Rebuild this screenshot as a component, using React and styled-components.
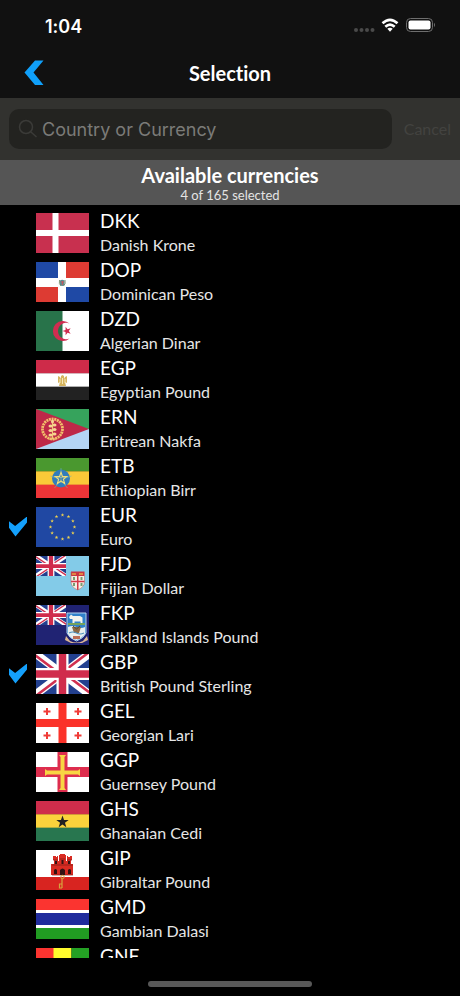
import React, { useState } from "react";
import styled, { createGlobalStyle } from "styled-components";

const starPoints = (cx, cy, r, turn = 0) =>
  Array.from({ length: 10 }, (_, i) => {
    const radius = i % 2 ? r * 0.4 : r;
    const angle = ((i * 36 - 90 + turn) * Math.PI) / 180;
    return `${(cx + radius * Math.cos(angle)).toFixed(2)},${(cy + radius * Math.sin(angle)).toFixed(2)}`;
  }).join(" ");

const Star = ({ x, y, r, fill, turn }) => (
  <polygon points={starPoints(x, y, r, turn)} fill={fill} />
);

const Bands = ({ colors }) =>
  colors.map((color, i) => (
    <rect
      key={color + i}
      y={(i * 40) / colors.length}
      width="53"
      height={40 / colors.length + 0.3}
      fill={color}
    />
  ));

const UnionJack = () => (
  <>
    <rect width="53" height="40" fill="#23408f" />
    <path d="M0 0L53 40M53 0L0 40" stroke="#fff" strokeWidth="8" />
    <path
      d="M-1 1L25.500 21M54 39L27.500 19M52 -1L25.500 19M1 41L27.500 21"
      stroke="#d03050"
      strokeWidth="2.600"
    />
    <path d="M26.500 0V40M0 20H53" stroke="#fff" strokeWidth="12" />
    <path d="M26.500 0V40M0 20H53" stroke="#d02c4c" strokeWidth="7.500" />
  </>
);

const Canton = () => (
  <svg width="30" height="20" viewBox="0 0 53 40" preserveAspectRatio="none">
    <UnionJack />
  </svg>
);

const flags = {
  DJF: <Bands colors={["#6ab2e7", "#12ad2b"]} />,
  DKK: (
    <>
      <rect width="53" height="40" fill="#c8304f" />
      <path d="M19.500 0V40M0 20H53" stroke="#fff" strokeWidth="6" />
    </>
  ),
  DOP: (
    <>
      <rect width="53" height="40" fill="#fff" />
      <path d="M0 0H22V16H0zM30 25H53V40H30z" fill="#1f49a5" />
      <path d="M30 0H53V16H30zM0 25H22V40H0z" fill="#dd3b33" />
      <path d="M24 18.500Q26 17 28.500 18.500V23Q26 25 24 23z" fill="#5d8a91" />
      <path d="M25 20H28M26.400 19V23" stroke="#c9595d" />
      <path d="M23.500 18Q22.500 22 25 24M29 18Q30 22 27.500 24" fill="none" stroke="#62805b" strokeWidth="0.800" />
    </>
  ),
  DZD: (
    <>
      <rect width="53" height="40" fill="#fff" />
      <rect width="26.500" height="40" fill="#28734a" />
      <path
        d="M33.500 12.500A10 10 0 1 0 33.500 27.500A8.200 8.200 0 1 1 33.500 12.500z"
        fill="#d02d50"
      />
      <Star x={31} y={20} r={4.500} turn={-18} fill="#d02d50" />
    </>
  ),
  EGP: (
    <>
      <Bands colors={["#ce2b49", "#ffffff", "#222222"]} />
      <path
        d="M22 16L24 17L25 19V16L26.500 15L28 16V19L29 17L31 16V23L29 22L30 26H23L24 22L22 23z"
        fill="#d5b45e"
      />
      <path d="M24 19V23M29 19V23M26.500 18V24" stroke="#f4e7b8" />
    </>
  ),
  ERN: (
    <>
      <rect width="53" height="20" fill="#36a35c" />
      <rect y="20" width="53" height="20" fill="#b4d5f5" />
      <path d="M0 0L53 20L0 40z" fill="#be2848" />
      <circle cx="16.500" cy="20" r="10" fill="none" stroke="#f2bf6b" strokeWidth="2.800" strokeDasharray="2 0.700" />
      <path d="M16.500 12V30M13 30H20" stroke="#f2c878" strokeWidth="1.200" />
      <g fill="#f6d491">
        <ellipse cx="16.500" cy="12.500" rx="1.500" ry="2" />
        <ellipse cx="14.500" cy="17" rx="2" ry="1.500" />
        <ellipse cx="18.500" cy="16" rx="2" ry="1.500" />
        <ellipse cx="14.500" cy="21.500" rx="2" ry="1.500" />
        <ellipse cx="18.500" cy="20.500" rx="2" ry="1.500" />
        <ellipse cx="14.500" cy="26" rx="2" ry="1.500" />
        <ellipse cx="18.500" cy="25" rx="2" ry="1.500" />
      </g>
    </>
  ),
  ETB: (
    <>
      <Bands colors={["#4a982f", "#fac938", "#ed3437"]} />
      <circle cx="25" cy="20.500" r="9" fill="#327cbb" />
      <path
        d="M25 14V9M31 18.500L35.500 17M28.500 25.500L31.500 29M21.500 25.500L18.500 29M19 18.500L14.500 17"
        transform="translate(0 1)"
        stroke="#6eb0b7"
        strokeWidth="0.600"
      />
      <polygon
        points={starPoints(25, 20.500, 6.200)}
        fill="#327cbb"
        stroke="#f2df78"
        strokeWidth="1.100"
      />
      <path d="M25 16V25M20.500 19.500H29.500" stroke="#ddd686" strokeWidth="0.500" />
    </>
  ),
  EUR: (
    <>
      <rect width="53" height="40" fill="#2048a3" />
      {Array.from({ length: 12 }, (_, i) => (
        <Star
          key={i}
          x={26.500 + 12 * Math.sin((i * Math.PI) / 6)}
          y={20 - 12 * Math.cos((i * Math.PI) / 6)}
          r={1.900}
          fill="#f1d34d"
        />
      ))}
    </>
  ),
  FJD: (
    <>
      <rect width="53" height="40" fill="#83cbe8" />
      <Canton />
      <path d="M35 16H48.500V26Q48.500 31 41.750 34Q35 31 35 26z" fill="#f5eee4" />
      <path d="M35 15.500H48.500V20H35z" fill="#c93543" />
      <path d="M36 18H40M43 18H47" stroke="#e6a343" strokeWidth="1.500" />
      <path d="M41.750 20V34M35 25.500H48.500" stroke="#d43747" strokeWidth="1.500" />
      <path d="M38 21V24M45.500 21V24M38 27V30M45.500 27V30" stroke="#789d70" strokeWidth="2" />
      <path d="M35 16V26Q35 31 41.750 34Q48.500 31 48.500 26V16" fill="none" stroke="#b17469" strokeWidth="0.600" />
    </>
  ),
  FKP: (
    <>
      <rect width="53" height="40" fill="#202373" />
      <Canton />
      <path d="M31 8H50V28Q48 33 40.500 36Q33 33 31 28z" fill="#3181ca" stroke="#b9d5ef" />
      <path d="M33 12L35 9.500L37 11H44L46.500 12.500V18H44.500V16.500H38.500V18H36.500V14H34z" fill="#f4f4ee" />
      <path d="M32 19H49" stroke="#75a35d" strokeWidth="2" />
      <path d="M32 22Q36 20 40.500 22T49 22V29Q45 34 40.500 35Q35 34 32 29z" fill="#e9efef" />
      <path d="M36 22H45L43 28H38z" fill="#8b6743" />
      <path d="M37 21L40.500 24L44 21" fill="none" stroke="#4c4a3a" />
      <path d="M33 28Q37 26 40.500 28T48 28" fill="none" stroke="#4e91bd" strokeWidth="1.200" />
      <path d="M30 31L34 36Q40.500 39 47 36L51 31L52 35L46 38H35L29 35z" fill="#dcb693" />
      <path d="M37 31H44V34H37z" fill="#bd6d54" />
    </>
  ),
  GBP: <UnionJack />,
  GEL: (
    <>
      <rect width="53" height="40" fill="#fff" />
      <path d="M26.500 0V40M0 20H53" stroke="#fb3229" strokeWidth="8" />
      <path
        d="M11 5V12M7.500 8.500H14.500M42 5V12M38.500 8.500H45.500M11 29V36M7.500 32.500H14.500M42 29V36M38.500 32.500H45.500"
        stroke="#f03b37"
        strokeWidth="2"
      />
    </>
  ),
  GGP: (
    <>
      <rect width="53" height="40" fill="#fff" />
      <path d="M26.500 0V40M0 20H53" stroke="#dd2d4e" strokeWidth="10" />
      <path
        d="M23 3H30L28.500 5V18.500H42L44 17V24L42 22.500H28.500V36L30 38H23L24.500 36V22.500H11L9 24V17L11 18.500H24.500V5z"
        fill="#f8d643"
      />
    </>
  ),
  GHS: (
    <>
      <Bands colors={["#cf2d4b", "#fbd23c", "#28764f"]} />
      <Star x={26.500} y={21} r={6.500} fill="#222" />
    </>
  ),
  GIP: (
    <>
      <rect width="53" height="40" fill="#fff" />
      <rect y="27" width="53" height="13" fill="#d82420" />
      <path
        d="M17 6H20V7H21V6H22V11H23V5H24V4H29V5H30V11H31V6H32V7H34V6H36V10H35V14H37V25H15V14H18V10H17z"
        fill="#d92b22"
      />
      <path d="M17 10H22M24 9H29M31 10H36M16 15H37M16 25H37" stroke="#7c1a16" strokeWidth="0.700" />
      <path
        d="M19 14V11H21V14zM25.500 14V10H27.500V14zM32 14V11H34V14zM18 24V20Q19.500 18 21 20V24zM24 25V20Q26.500 17 29 20V25zM32 24V20Q33.500 18 35 20V24z"
        fill="#321313"
      />
      <circle cx="26.500" cy="27" r="1.700" fill="none" stroke="#d6a33f" />
      <path d="M26 28V38M26 34H23.500V38H26" fill="none" stroke="#d6a33f" strokeWidth="1.200" />
    </>
  ),
  GMD: (
    <>
      <rect width="53" height="40" fill="#fff" />
      <rect width="53" height="11" fill="#fb3430" />
      <rect y="14" width="53" height="12" fill="#202c9d" />
      <rect y="29" width="53" height="11" fill="#219c22" />
    </>
  ),
  GNF: (
    <>
      <rect width="18" height="40" fill="#fb3430" />
      <rect x="17.500" width="18" height="40" fill="#fffb2d" />
      <rect x="35.500" width="17.500" height="40" fill="#24a124" />
    </>
  ),
};

const currencies = [
  ["DJF", "Djiboutian Franc"],
  ["DKK", "Danish Krone"],
  ["DOP", "Dominican Peso"],
  ["DZD", "Algerian Dinar"],
  ["EGP", "Egyptian Pound"],
  ["ERN", "Eritrean Nakfa"],
  ["ETB", "Ethiopian Birr"],
  ["EUR", "Euro"],
  ["FJD", "Fijian Dollar"],
  ["FKP", "Falkland Islands Pound"],
  ["GBP", "British Pound Sterling"],
  ["GEL", "Georgian Lari"],
  ["GGP", "Guernsey Pound"],
  ["GHS", "Ghanaian Cedi"],
  ["GIP", "Gibraltar Pound"],
  ["GMD", "Gambian Dalasi"],
  ["GNF", "Guinean Franc"],
];

const StatusIcons = () => (
  <svg width="84" height="18" viewBox="0 0 84 18" aria-hidden="true">
    <g fill="#4a4a4a">
      <circle cx="4" cy="13" r="2" />
      <circle cx="9.500" cy="13" r="2" />
      <circle cx="15" cy="13" r="2" />
      <circle cx="20.500" cy="13" r="2" />
    </g>
    <g fill="none" stroke="#fff" strokeWidth="2.600">
      <path d="M30.500 6.300Q38 -0.700 45.500 6.300" />
      <path d="M33.300 9.800Q38 5.400 42.700 9.800" />
    </g>
    <path d="M35.300 11.800Q38 9.600 40.700 11.800L38 14.700z" fill="#fff" />
    <rect x="54.500" y="1.500" width="26" height="13" rx="4" fill="none" stroke="#6e6e6e" />
    <rect x="56.500" y="3.500" width="22" height="9" rx="2" fill="#fff" />
    <path d="M82 5.800Q84 8 82 10.200z" fill="#6e6e6e" />
  </svg>
);

const App = () => {
  const [selected, setSelected] = useState(["EUR", "GBP"]);

  const toggle = (code) =>
    setSelected((prev) =>
      prev.includes(code) ? prev.filter((c) => c !== code) : [...prev, code]
    );

  return (
    <Screen>
      <GlobalStyle />
      <StatusBar>
        <Time>1:04</Time>
        <StatusIcons />
      </StatusBar>
      <NavBar>
        <BackButton aria-label="Back">
          <svg width="20" height="26" viewBox="0 0 20 26">
            <path d="M11 0.500H19.500L9.500 12.500L19.500 25H11L0.500 12.500z" fill="#10a0fa" />
          </svg>
        </BackButton>
        <Title>Selection</Title>
      </NavBar>
      <SearchBar>
        <SearchField>
          <svg width="20" height="20" viewBox="0 0 20 20" fill="none" stroke="#3b3b38" strokeWidth="1.500">
            <circle cx="8" cy="8" r="6.500" />
            <path d="M12.700 12.700L18.500 18" />
          </svg>
          <SearchInput placeholder="Country or Currency" aria-label="Country or Currency" />
        </SearchField>
        <CancelButton>Cancel</CancelButton>
      </SearchBar>
      <SectionHeader>
        <SectionTitle>Available currencies</SectionTitle>
        <SectionNote>4 of 165 selected</SectionNote>
      </SectionHeader>
      <Viewport>
        <List>
          {currencies.map(([code, name]) => (
            <li key={code}>
              <Row>
                <Tick
                  type="checkbox"
                  checked={selected.includes(code)}
                  onChange={() => toggle(code)}
                />
                <Flag viewBox="0 0 53 40" aria-hidden="true">
                  {flags[code]}
                </Flag>
                <Labels>
                  <Code>{code}</Code>
                  <Name>{name}</Name>
                </Labels>
              </Row>
            </li>
          ))}
        </List>
      </Viewport>
      <Footer>
        <HomeIndicator />
      </Footer>
    </Screen>
  );
};

export default App;

const GlobalStyle = createGlobalStyle`
  * {
    box-sizing: border-box;
  }

  body {
    margin: 0;
    background: #000;
    color: #fff;
    font-family: Lato, "Liberation Sans", sans-serif;
    font-variant-ligatures: none;
  }
`;

const Screen = styled.div`
  display: flex;
  flex-direction: column;
  height: 100vh;
`;

const StatusBar = styled.div`
  display: flex;
  justify-content: space-between;
  align-items: center;
  height: 50px;
  padding: 2px 24px 0 45px;
  background: #111;
`;

const Time = styled.span`
  font-family: Inter, sans-serif;
  font-size: 18px;
  font-weight: 600;
`;

const NavBar = styled.header`
  display: grid;
  grid-template-columns: 68px 1fr 68px;
  align-items: center;
  height: 48px;
  padding-bottom: 2px;
  background: #111;
`;

const BackButton = styled.button`
  display: flex;
  justify-content: center;
  padding: 0;
  border: 0;
  background: none;
  cursor: pointer;
`;

const Title = styled.h1`
  margin: 0;
  font-size: 20px;
  font-weight: 700;
  text-align: center;
`;

const SearchBar = styled.div`
  display: flex;
  align-items: center;
  gap: 12px;
  height: 62px;
  padding: 0 9px;
  background: #32322f;
`;

const SearchField = styled.div`
  display: flex;
  flex: 1;
  align-items: center;
  gap: 4px;
  min-width: 0;
  height: 40px;
  padding: 0 9px;
  border-radius: 10px;
  background: #232320;
`;

const SearchInput = styled.input`
  flex: 1;
  min-width: 0;
  padding: 0;
  border: 0;
  outline: none;
  background: none;
  color: #fff;
  font-family: Inter, sans-serif;
  font-size: 18px;

  &::placeholder {
    color: #7b7b78;
  }
`;

const CancelButton = styled.button`
  padding: 0 0 2px;
  border: 0;
  background: none;
  color: #434340;
  font-family: Lato, sans-serif;
  font-size: 16px;
`;

const SectionHeader = styled.div`
  display: flex;
  flex-direction: column;
  align-items: center;
  height: 45px;
  padding-top: 3px;
  background: #555;
`;

const SectionTitle = styled.h2`
  margin: 0;
  font-size: 20px;
  font-weight: 700;
  line-height: 24px;
`;

const SectionNote = styled.span`
  color: #e4e4e4;
  font-size: 13px;
  line-height: 16px;
`;

const Viewport = styled.main`
  flex: 1;
  min-height: 0;
  overflow: hidden;
`;

/* list is scrolled most of one row down */
const List = styled.ul`
  margin: -46px 0 0;
  padding: 0;
  list-style: none;
`;

const Row = styled.label`
  display: flex;
  align-items: center;
  height: 49px;
  padding-left: 9px;
  cursor: pointer;
`;

const Tick = styled.input`
  appearance: none;
  width: 18px;
  height: 20px;
  margin: 0 9px 0 0;
  clip-path: polygon(0 24%, 34% 48%, 100% 0, 100% 30%, 36% 100%, 0 56%);

  &:checked {
    background: #14a0fb;
  }
`;

const Flag = styled.svg`
  width: 53px;
  height: 40px;
  margin-right: 11px;
`;

const Labels = styled.div`
  display: flex;
  flex-direction: column;
`;

const Code = styled.span`
  font-size: 19px;
  line-height: 24px;
`;

const Name = styled.span`
  color: #e6e6e6;
  font-size: 16px;
  line-height: 24px;
`;

const Footer = styled.footer`
  display: flex;
  justify-content: center;
  align-items: flex-end;
  height: 38px;
  padding-bottom: 9px;
`;

const HomeIndicator = styled.div`
  width: 164px;
  height: 6px;
  border-radius: 3px;
  background: #585858;
`;
